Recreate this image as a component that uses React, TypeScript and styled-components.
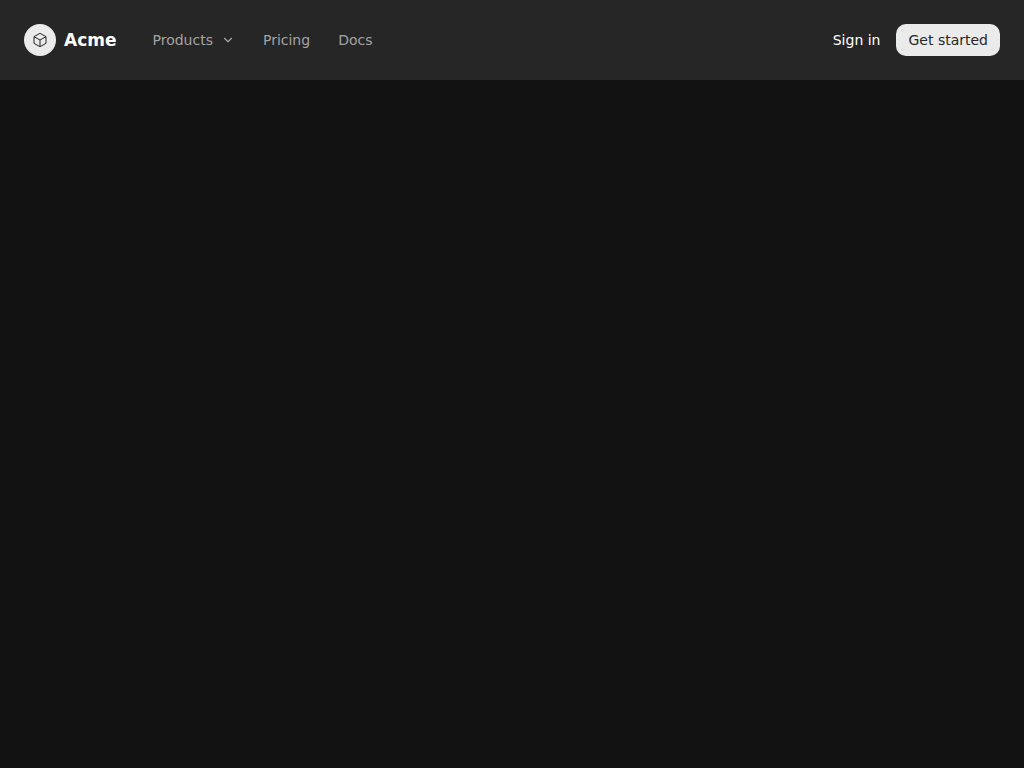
import React from "react";
import styled, { createGlobalStyle } from "styled-components";
import { ChevronDown } from "lucide-react";

const Global = createGlobalStyle`
  html, body { margin: 0; padding: 0; background: #121212; }
  * { box-sizing: border-box; }
`;
const Page = styled.div`
  min-height: 768px;
  background: #121212;
  font-family: "DejaVu Sans", sans-serif;
`;
const Header = styled.header`
  height: 80px;
  padding: 0 24px;
  background: #262626;
  display: flex;
  align-items: center;
  justify-content: space-between;
`;
const Left = styled.div`
  display: flex;
  align-items: center;
  gap: 36px;
`;
const Brand = styled.a`
  display: flex;
  align-items: center;
  gap: 8px;
  color: #fff;
  font-size: 17px;
  font-weight: 700;
`;
const LogoMark = styled.span`
  width: 32px;
  height: 32px;
  border-radius: 50%;
  background: #ebebeb;
  color: #262626;
  display: flex;
  align-items: center;
  justify-content: center;
`;
const Nav = styled.nav`
  display: flex;
  align-items: center;
  gap: 28px;
`;
const NavItem = styled.a`
  display: flex;
  align-items: center;
  gap: 8px;
  color: #a3a3a3;
  font-size: 14px;
`;
const Right = styled.div`
  display: flex;
  align-items: center;
  gap: 16px;
`;
const SignIn = styled.a`
  color: #fff;
  font-size: 14px;
`;
const Cta = styled.button`
  height: 32px;
  padding: 0 12px;
  border: 0;
  border-radius: 10px;
  background: #ebebeb;
  color: #262626;
  font: 14px "DejaVu Sans", sans-serif;
`;

const CubeIcon = () => (
  <svg width="16" height="16" viewBox="0 0 24 24" fill="none" stroke="currentColor" strokeWidth="1.5">
    <path d="M12 2 21 7V17L12 22 3 17V7Z" />
    <path d="M3 7 12 12 21 7M12 12V22" />
  </svg>
);

export default function App() {
  return (
    <Page>
      <Global />
      <Header>
        <Left>
          <Brand>
            <LogoMark><CubeIcon /></LogoMark>
            Acme
          </Brand>
          <Nav>
            <NavItem>Products <ChevronDown size={14} strokeWidth={2} /></NavItem>
            <NavItem>Pricing</NavItem>
            <NavItem>Docs</NavItem>
          </Nav>
        </Left>
        <Right>
          <SignIn>Sign in</SignIn>
          <Cta>Get started</Cta>
        </Right>
      </Header>
    </Page>
  );
}
